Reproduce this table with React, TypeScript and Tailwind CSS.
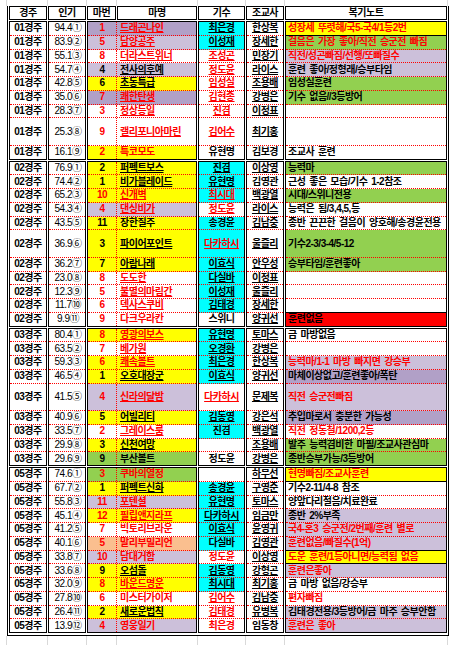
import React from 'react';

type C = 'P' | 'L' | 'Y' | 'G' | 'O' | 'C' | 'R' | 'W';
const BG: Record<C, string> = {
  P: 'bg-[#b1a0c7]',
  L: 'bg-[#ccc0da]',
  Y: 'bg-[#ffff00]',
  G: 'bg-[#92d050]',
  O: 'bg-[#fabf8f]',
  C: 'bg-[#00ffff]',
  R: 'bg-[#ff0000]',
  W: 'bg-white',
};

type Row = {
  p: string;
  n: string;
  h: string;
  hb: C;
  hr: boolean;
  hu: boolean;
  tall: boolean;
  j: string;
  jb: C;
  jr: boolean;
  ju: boolean;
  t: string;
  tu: boolean;
  no: string;
  nb: C;
  nr: boolean;
  bd: boolean;
};

function row(
  p: string,
  n: string,
  h: string,
  hb: C,
  hf: string,
  j: string,
  jb: C,
  jf: string,
  t: string,
  tf: string,
  no: string,
  nb: C,
  nf: string
): Row {
  return {
    p,
    n,
    h,
    hb,
    hr: hf.includes('r'),
    hu: hf.includes('u'),
    tall: hf.includes('t'),
    j,
    jb,
    jr: jf.includes('r'),
    ju: jf.includes('u'),
    t,
    tu: tf.includes('u'),
    no,
    nb,
    nr: nf.includes('r'),
    bd: nf.includes('b'),
  };
}

const blocks: { race: string; rows: Row[] }[] = [
  {
    race: '01경주',
    rows: [
      row('94.4①', '1', '드래곤나인', 'P', 'ru', '최은경', 'C', 'u', '한상복', 'u', '성장세 뚜렷해/국5-국4/1등2번', 'Y', 'rb'),
      row('83.9②', '5', '담양공주', 'L', 'ru', '이성재', 'C', 'u', '장세한', 'u', '걸음은 가장 좋아/직전 승군전 빠짐', 'G', 'r'),
      row('55.1③', '8', '더라스트위너', 'W', 'ru', '조성곤', 'W', 'ru', '민장기', 'u', '직전/성곤빠짐/선행/또빠질수', 'L', 'r'),
      row('54.7④', '4', '전사의후예', 'L', 'u', '정도윤', 'W', 'ru', '라이스', 'u', '훈련 좋아/정형래/승부타임', 'L', ''),
      row('42.8⑤', '6', '초동특급', 'Y', 'u', '임성실', 'W', 'ru', '조용배', 'u', '임성실훈련', 'G', ''),
      row('35.0⑥', '7', '쾌한탄생', 'P', 'ru', '김현종', 'W', 'ru', '강병은', 'u', '기수 없음//3등방어', 'G', ''),
      row('28.3⑦', '3', '정상등일', 'W', 'ru', '진겸', 'W', 'ru', '이정표', 'u', '', 'W', ''),
      row('25.3⑧', '9', '캘리포니아마린', 'W', 'rut', '김어수', 'W', 'ru', '최기홍', 'u', '', 'W', ''),
      row('16.1⑨', '2', '특코모도', 'Y', 'r', '유현명', 'W', '', '김보경', '', '조교사 훈련', 'W', ''),
    ],
  },
  {
    race: '02경주',
    rows: [
      row('76.9①', '2', '퍼펙트보스', 'Y', 'u', '진겸', 'C', 'u', '이상영', 'u', '능력마', 'G', ''),
      row('74.4②', '1', '비가블레이드', 'Y', 'u', '유현명', 'C', 'u', '김영관', '', '근성 좋은 모습/기수 1-2참조', 'W', ''),
      row('65.2③', '10', '신개벽', 'Y', 'ru', '최시대', 'C', 'ru', '백광열', 'u', '시대/스위니전용', 'G', ''),
      row('54.3④', '4', '댄싱비가', 'L', 'ru', '정도윤', 'W', 'ru', '라이스', 'u', '능력은 됨/3,4,5,등', 'W', ''),
      row('43.5⑤', '11', '장한질주', 'Y', '', '송경윤', 'C', '', '김남중', 'u', '종반 끈끈한 걸음이 양호해/송경윤전용', 'W', ''),
      row('36.9⑥', '3', '파이어포인트', 'Y', 'ut', '다카하시', 'C', 'ru', '울즐리', 'u', '기수2-3/3-4/5-12', 'G', ''),
      row('36.2⑦', '7', '아람나래', 'Y', 'u', '이효식', 'C', 'u', '안우성', 'u', '승부타임/훈련좋아', 'G', ''),
      row('23.0⑧', '8', '도도한', 'W', 'ru', '다실바', 'C', 'u', '이정표', 'u', '', 'W', ''),
      row('12.3⑨', '5', '불멸의마림간', 'W', 'ru', '이성재', 'C', 'u', '울즐리', 'u', '', 'W', ''),
      row('11.7⑩', '6', '덱사스쿠비', 'W', 'ru', '김태경', 'C', 'u', '장세한', 'u', '', 'W', ''),
      row('9.9⑪', '9', '다크우라칸', 'W', 'r', '스위니', 'W', '', '양귀선', 'u', '훈련없음', 'R', 'b'),
    ],
  },
  {
    race: '03경주',
    rows: [
      row('80.4①', '8', '영광의보스', 'Y', 'ru', '유현명', 'C', 'u', '토마스', 'u', '금 마방없음', 'W', ''),
      row('63.5②', '7', '베가원', 'W', 'ru', '오경환', 'C', 'u', '강병은', 'u', '', 'W', ''),
      row('59.3③', '6', '쾌속볼트', 'Y', 'ru', '최은경', 'C', 'u', '한상복', 'u', '능력마/1-1 마방 빠지면 강승부', 'L', 'r'),
      row('46.5④', '1', '오호대장군', 'Y', 'u', '이효식', 'C', 'u', '양귀선', 'u', '마체이상없고/훈련좋아/폭탄', 'P', ''),
      row('41.5⑤', '4', '신라의달밤', 'L', 'rut', '다카하시', 'W', 'ru', '문제복', 'u', '직전 승군전빠짐', 'L', 'r'),
      row('40.9⑥', '5', '어빌리티', 'Y', 'u', '김동영', 'C', 'u', '강은석', 'u', '추입마로서 충분한 가능성', 'P', ''),
      row('33.5⑦', '2', '그레이스룸', 'W', 'ru', '진겸', 'C', '', '백광열', 'u', '직전 정동철/1200,2등', 'W', 'r'),
      row('29.9⑧', '3', '신천여망', 'Y', 'u', '', 'W', '', '조용배', 'u', '발주 능력겸비한 마필/조교사관심마', 'G', ''),
      row('29.6⑨', '9', '부산볼트', 'G', '', '정도윤', 'W', '', '강병은', 'u', '종반승부가능/3등방어', 'G', ''),
    ],
  },
  {
    race: '05경주',
    rows: [
      row('74.6①', '3', '쿠바의열정', 'G', 'r', '', 'W', '', '하무선', 'u', '현명빠짐/조교사훈련', 'Y', 'rb'),
      row('67.7②', '1', '퍼펙트신화', 'Y', 'u', '송경윤', 'C', 'u', '구영준', 'u', '기수2-11/4-8 참조', 'W', ''),
      row('55.8③', '11', '포텐셜', 'L', 'ru', '유현명', 'C', 'u', '토마스', 'u', '양앞다리절음/치료완료', 'W', ''),
      row('45.1④', '12', '필립앤지라프', 'Y', 'ru', '다카하시', 'C', 'u', '임금만', 'u', '종반 2%부족', 'L', ''),
      row('41.2⑤', '7', '빅토리브라운', 'W', 'r', '이효식', 'C', 'u', '윤영귀', 'u', '국4-혼3 승군전/2번째/훈련 별로', 'L', 'r'),
      row('40.1⑥', '5', '말리부밀리언', 'O', 'r', '다실바', 'C', '', '김영관', 'u', '훈련없음/빠질수(1억)', 'L', 'r'),
      row('33.8⑦', '10', '담대거함', 'L', 'r', '정도윤', 'W', 'r', '이상영', 'u', '도운 훈련/1등아니면/능력됨 없음', 'Y', 'rb'),
      row('33.6⑧', '9', '오섬돌', 'Y', 'u', '김동영', 'C', 'u', '강형곤', 'u', '훈련은좋아', 'L', 'r'),
      row('32.0⑨', '8', '바운드명운', 'Y', 'ru', '최시대', 'C', 'u', '최기홍', 'u', '금 마방 없음/강승부', 'W', ''),
      row('27.8⑩', '6', '미스터가이저', 'W', 'r', '김어수', 'W', 'ru', '김남중', 'u', '편자빠짐', 'W', 'r'),
      row('26.4⑪', '2', '새로운법칙', 'Y', 'u', '김태경', 'W', 'ru', '유병복', 'u', '김태경전용/3등방어/금 마주 승부안함', 'L', ''),
      row('13.9⑫', '4', '영웅일기', 'L', 'r', '최은경', 'W', 'r', '임동창', '', '훈련은 좋아', 'L', 'r'),
    ],
  },
];

const UL = 'underline decoration-1 underline-offset-1';
const RED = 'text-[#ff0000]';
const BLK = 'text-black';
const DOT = 'border-b border-dotted border-[#ff0000]';

function Block({ race, rows }: { race: string; rows: Row[] }) {
  const last = rows.length - 1;
  const h = (i: number) => {
    const r = rows[i];
    if (r.tall) return i === last ? 'h-[26.5px]' : 'h-[27.5px]';
    return i === last ? 'h-[12.75px]' : 'h-[13.75px]';
  };
  const line = (i: number) => (i === last ? '' : DOT);
  const noteLine = (i: number) => {
    if (i === last) return '';
    if (rows[i].bd || rows[i + 1].bd) return 'border-b border-black';
    return DOT;
  };
  return (
    <div className="flex gap-px">
      <div className="flex w-[38px] flex-col border border-black">
        {rows.map((r, i) => (
          <div key={i} className={`${h(i)} ${line(i)} flex items-center justify-center whitespace-nowrap font-bold`}>
            {race}
          </div>
        ))}
      </div>
      <div className="flex w-[38px] flex-col border border-black">
        {rows.map((r, i) => (
          <div key={i} className={`${h(i)} ${line(i)} flex items-center justify-center whitespace-nowrap pl-[2px] font-normal`}>
            {r.p}
          </div>
        ))}
      </div>
      <div className="flex w-[110px] flex-col border border-black">
        {rows.map((r, i) => (
          <div key={i} className={`${h(i)} ${line(i)} ${BG[r.hb]} flex font-bold ${r.hr ? RED : BLK}`}>
            <div className="flex w-[29px] items-center justify-center border-r border-dotted border-[#ff0000]">
              {r.n}
            </div>
            <div className="flex flex-1 items-center overflow-hidden whitespace-nowrap pl-[3px]">
              <span className={r.hu ? UL : ''}>{r.h}</span>
            </div>
          </div>
        ))}
      </div>
      <div className="flex w-[47px] flex-col border border-black">
        {rows.map((r, i) => (
          <div
            key={i}
            className={`${h(i)} ${line(i)} ${BG[r.jb]} flex items-center justify-center whitespace-nowrap font-bold ${r.jr ? RED : BLK}`}
          >
            <span className={r.ju ? UL : ''}>{r.j}</span>
          </div>
        ))}
      </div>
      <div className="flex w-[38px] flex-col border border-black">
        {rows.map((r, i) => (
          <div key={i} className={`${h(i)} ${line(i)} flex items-center justify-center whitespace-nowrap font-bold`}>
            <span className={r.tu ? UL : ''}>{r.t}</span>
          </div>
        ))}
      </div>
      <div className="flex w-[162px] flex-col border border-black">
        {rows.map((r, i) => (
          <div
            key={i}
            className={`${h(i)} ${noteLine(i)} ${BG[r.nb]} flex items-center overflow-hidden whitespace-nowrap pl-[2px] font-bold [word-spacing:1.5px] ${r.nr ? RED : BLK}`}
          >
            {r.no}
          </div>
        ))}
      </div>
    </div>
  );
}

function GridStrip({ height }: { height: string }) {
  return (
    <div className={`flex ${height}`}>
      <div className="w-[7px] border-r border-[#d9d9d9]" />
      <div className="w-[41px] border-r border-[#d9d9d9]" />
      <div className="w-[39px] border-r border-[#d9d9d9]" />
      <div className="w-[30px] border-r border-[#d9d9d9]" />
      <div className="w-[81px] border-r border-[#d9d9d9]" />
      <div className="w-[48px] border-r border-[#d9d9d9]" />
      <div className="w-[39px] border-r border-[#d9d9d9]" />
      <div className="w-[163px] border-r border-[#d9d9d9]" />
    </div>
  );
}

export default function App() {
  return (
    <div className="h-[645px] w-[454px] overflow-hidden bg-white font-[family-name:'Liberation_Sans','Noto_Sans_CJK_KR',sans-serif] text-[10px] leading-none tracking-[-0.5px] text-black">
      <GridStrip height="h-[6px]" />
      <div className="ml-[7px] flex w-[442px] flex-col gap-px border-x border-b border-black px-px pb-[2px]">
        <div className="flex gap-px font-bold">
          <div className="flex h-[14px] w-[38px] items-center justify-center border border-black">경주</div>
          <div className="flex h-[14px] w-[38px] items-center justify-center border border-black">인기</div>
          <div className="flex h-[14px] w-[29px] items-center justify-center border border-black">마번</div>
          <div className="flex h-[14px] w-[80px] items-center justify-center border border-black">마명</div>
          <div className="flex h-[14px] w-[47px] items-center justify-center border border-black">기수</div>
          <div className="flex h-[14px] w-[38px] items-center justify-center border border-black">조교사</div>
          <div className="flex h-[14px] w-[162px] items-center justify-center border border-black">복기노트</div>
        </div>
        {blocks.map((b) => (
          <Block key={b.race} race={b.race} rows={b.rows} />
        ))}
      </div>
      <GridStrip height="h-[10px]" />
    </div>
  );
}
